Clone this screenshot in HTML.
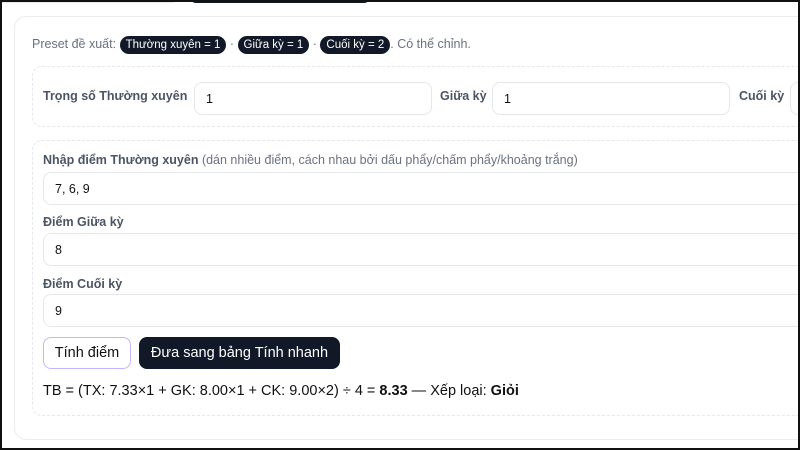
<!DOCTYPE html><html><head><meta charset="utf-8"><style>
*{box-sizing:border-box}
body{margin:0;width:800px;height:450px;overflow:hidden;background:#fff;font-family:"Liberation Sans",sans-serif;position:relative}
.frame{position:absolute;inset:0;border:2px solid #111;z-index:10;pointer-events:none}
.topbtn{position:absolute;left:190px;top:-10px;width:180px;height:13px;background:#111827;border-radius:6px}
.topline{position:absolute;left:0;top:0;width:175px;height:3px;border-bottom:1px solid #e5e7eb;border-right:1px solid #e5e7eb;border-radius:0 0 8px 0}
.card{position:absolute;left:14px;top:16px;width:820px;height:424px;border:1px solid #ececec;border-radius:12px}
.abs{position:absolute}
.pre{left:32px;top:36px;font-size:12.5px;color:#6b7280;white-space:nowrap}
.pill{display:inline-block;background:#111827;color:#fff;border-radius:10px;padding:3px 6px;font-size:11.5px}
.box{border:1px dashed #e5e7eb;border-radius:10px}
.inp{position:absolute;border:1px solid #e5e7eb;border-radius:8px;font-size:12.5px;color:#111;padding-left:11px;display:flex;align-items:center}
.lbl{position:absolute;font-size:12.5px;font-weight:bold;color:#4b5563;white-space:nowrap}
</style></head><body>
<div class="topline"></div><div class="topbtn"></div>
<div class="card"></div>
<div class="abs pre">Preset đề xuất: <span class="pill">Thường xuyên = 1</span> · <span class="pill">Giữa kỳ = 1</span> · <span class="pill">Cuối kỳ = 2</span>. Có thể chỉnh.</div>
<div class="abs box" style="left:32px;top:66px;width:800px;height:61px"></div>
<div class="lbl" style="left:43px;top:89px">Trọng số Thường xuyên</div>
<div class="inp" style="left:194px;top:82px;width:238px;height:33px">1</div>
<div class="lbl" style="left:440px;top:89px">Giữa kỳ</div>
<div class="inp" style="left:492px;top:82px;width:238px;height:33px">1</div>
<div class="lbl" style="left:739px;top:89px">Cuối kỳ</div>
<div class="inp" style="left:790px;top:82px;width:238px;height:33px"></div>
<div class="abs box" style="left:32px;top:140px;width:800px;height:276px"></div>
<div class="lbl" style="left:43px;top:153px">Nhập điểm Thường xuyên <span style="font-weight:normal;color:#6b7280">(dán nhiều điểm, cách nhau bởi dấu phẩy/chấm phẩy/khoảng trắng)</span></div>
<div class="inp" style="left:43px;top:172px;width:800px;height:33px">7, 6, 9</div>
<div class="lbl" style="left:43px;top:215px">Điểm Giữa kỳ</div>
<div class="inp" style="left:43px;top:233px;width:800px;height:33px">8</div>
<div class="lbl" style="left:43px;top:277px">Điểm Cuối kỳ</div>
<div class="inp" style="left:43px;top:294px;width:800px;height:33px">9</div>
<div class="abs" style="left:43px;top:337px;width:88px;height:32px;border:1px solid #c4b5fd;border-radius:8px;font-size:14.5px;display:flex;align-items:center;justify-content:center;color:#111">Tính điểm</div>
<div class="abs" style="left:139px;top:337px;width:201px;height:32px;background:#111827;border-radius:8px;font-size:14.5px;display:flex;align-items:center;justify-content:center;color:#fff">Đưa sang bảng Tính nhanh</div>
<div class="abs" style="left:43px;top:383px;font-size:14.5px;color:#111;white-space:nowrap">TB = (TX: 7.33×1 + GK: 8.00×1 + CK: 9.00×2) ÷ 4 = <b>8.33</b> — Xếp loại: <b>Giỏi</b></div>
<div class="frame"></div>
</body></html>
